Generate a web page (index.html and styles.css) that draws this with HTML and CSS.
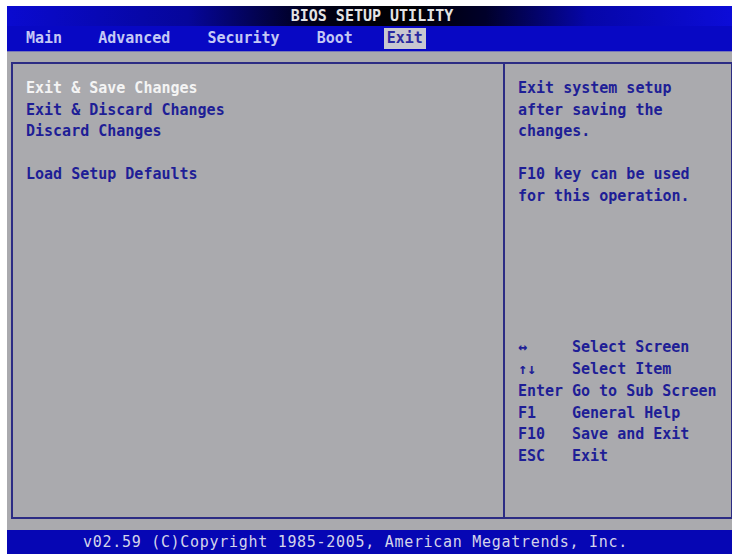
FILE: index.html
```html
<!DOCTYPE html>
<html lang="en">

<head>
  <meta charset="UTF-8">
  <title>BIOS Setup Utility</title>
  <link rel="stylesheet" href="styles.css">
</head>

<body>
  <div class="screen">
    <!--标题栏-->
    <div class="titlebar">BIOS SETUP UTILITY</div>
    <!--菜单-->
    <ul class="menu">
      <li class="m-main">Main</li>
      <li class="m-adv">Advanced</li>
      <li class="m-sec">Security</li>
      <li class="m-boot">Boot</li>
      <li class="m-exit current">Exit</li>
    </ul>
    <div class="body">
      <div class="frame">
        <div class="options">
          <p class="selected">Exit &amp; Save Changes</p>
          <p>Exit &amp; Discard Changes</p>
          <p>Discard Changes</p>
          <p class="gap">Load Setup Defaults</p>
        </div>
        <div class="side">
          <div class="help">
            <p>Exit system setup</p>
            <p>after saving the</p>
            <p>changes.</p>
            <p class="gap">F10 key can be used</p>
            <p>for this operation.</p>
          </div>
          <ul class="keys">
            <li><span class="k">&#8596;</span>Select Screen</li>
            <li><span class="k">&#8593;&#8595;</span>Select Item</li>
            <li><span class="k">Enter</span>Go to Sub Screen</li>
            <li><span class="k">F1</span>General Help</li>
            <li><span class="k">F10</span>Save and Exit</li>
            <li><span class="k">ESC</span>Exit</li>
          </ul>
        </div>
      </div>
    </div>
    <!--底部版权-->
    <div class="footer">v02.59 (C)Copyright 1985-2005, American Megatrends, Inc.</div>
  </div>
</body>

</html>
```

FILE: styles.css
```css
* {
  margin: 0;
  padding: 0
}

ul {
  list-style: none
}

body {
  background-color: #fff;
  font-family: "DejaVu Sans Mono", "Liberation Mono", monospace;
  font-weight: bold;
  font-size: 15px;
}

.screen {
  width: 725px;
  height: 548px;
  margin: 6px 0 0 7px;
  display: flex;
  flex-direction: column;
  background-color: #aaaaae;
}

.titlebar {
  height: 20px;
  line-height: 20px;
  padding-left: 5px;
  text-align: center;
  color: #e4e4e4;
  background: linear-gradient(to right, #0a0ad0 0%, #06069a 25%, #000018 42%, #000 55%, #00002a 66%, #0606a8 80%, #0c0cd8 100%);
}

.menu {
  height: 25px;
  display: flex;
  align-items: center;
  background-color: #0808c4;
  color: #c4c8f4;
  border-bottom: 1px solid #7878b8;
}

.menu li {
  height: 21px;
  line-height: 21px;
}

.m-main {
  margin-left: 19px;
}

.m-adv {
  margin-left: 36px;
}

.m-sec {
  margin-left: 37px;
}

.m-boot {
  margin-left: 37px;
}

.m-exit {
  margin-left: 31px;
  padding: 0 3px;
}

.menu li.current {
  background-color: #c8c8d0;
  color: #2a2aa0;
}

.body {
  flex: 1;
  padding: 10px 0 11px 4px;
  display: flex;
}

.frame {
  flex: 1;
  display: flex;
  border: 2px solid #2c2c84;
  border-right-width: 1px;
  color: #1e1e96;
}

.options {
  width: 477px;
  padding: 14px 0 0 13px;
  border-right: 2px solid #2c2c84;
  line-height: 21.5px;
}

.options .selected {
  color: #f4f4f4;
}

.gap {
  margin-top: 21.5px;
}

.side {
  flex: 1;
  padding: 14px 0 0 13px;
  display: flex;
  flex-direction: column;
  line-height: 21.5px;
}

.help {
  flex: 1;
}

.keys {
  margin-bottom: 49px;
  line-height: 21.8px;
}

.keys li {
  display: flex;
}

.keys .k {
  width: 54px;
}

.footer {
  height: 24px;
  line-height: 24px;
  padding-right: 28px;
  text-align: center;
  background-color: #0606b4;
  color: #d4d4ea;
  font-size: 15px;
  letter-spacing: 0.7px;
  font-weight: normal;
}
```
